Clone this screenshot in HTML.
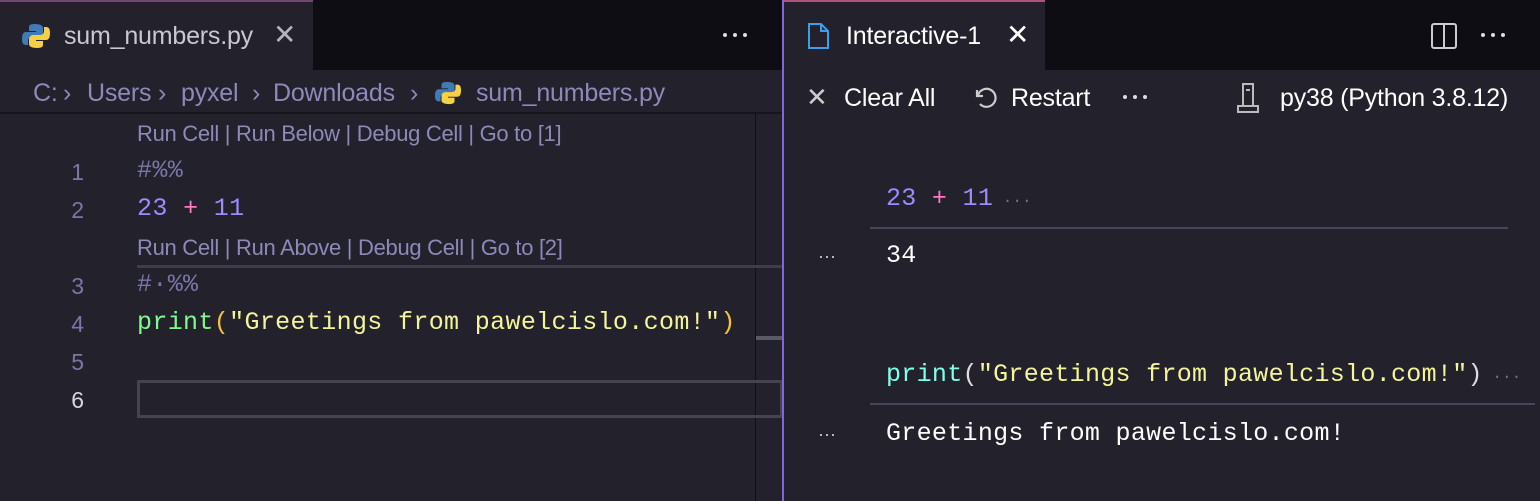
<!DOCTYPE html>
<html><head><style>
*{margin:0;padding:0;box-sizing:border-box}
body{width:1540px;height:501px;background:#22212c;overflow:hidden;position:relative;font-family:"Liberation Sans",sans-serif;color:#d8d6e0}
.abs{position:absolute;white-space:nowrap}
.ui{font-size:25px;letter-spacing:-0.2px}
.mono{font-family:"Liberation Mono",monospace}
.lm{font-size:25px;letter-spacing:0.35px}
.rm{font-size:25px;letter-spacing:0.3px}
.ln{color:#7a77a8;font-size:23px;width:30px;text-align:right}
.lens{color:#8d89b8;font-size:22px;letter-spacing:-0.3px}
.bc{color:#8d89b8;top:79px}
</style></head><body>
<div class="abs" style="left:0;top:0;width:1540px;height:70px;background:#0e0d13"></div>
<div class="abs" style="left:0;top:0;width:313px;height:70px;background:#22212c;border-top:2px solid #6e4a6e"></div>
<div class="abs" style="left:783px;top:0;width:262px;height:70px;background:#22212c;border-top:2px solid #b0527a"></div>
<svg class="abs" style="left:22px;top:22px" width="28" height="28" viewBox="0 0 28 28"><path d="M13 2c-6 0-6 2-6 4v3h7v1H4c-3 0-4 3-4 7s1 6 4 6h2v-4c0-3 2-4 4-4h7c2 0 4-2 4-4V6c0-2-2-4-8-4z" fill="#3f7bb5"/><path d="M15 26c6 0 6-2 6-4v-3h-7v-1h10c3 0 4-3 4-7s-1-6-4-6h-2v4c0 3-2 4-4 4h-7c-2 0-4 2-4 4v5c0 2 2 4 8 4z" fill="#f5d144"/></svg>
<div class="abs ui" style="left:64px;top:22px;color:#c9c7d2">sum_numbers.py</div>
<div class="abs" style="left:273px;top:18px;font-size:28px;color:#b5b3c0">✕</div>
<svg class="abs" style="left:722px;top:30px" width="30" height="10"><circle cx="3" cy="5" r="2" fill="#ddd"/><circle cx="13" cy="5" r="2" fill="#ddd"/><circle cx="23" cy="5" r="2" fill="#ddd"/></svg>
<div class="abs ui bc" style="left:33px">C:</div>
<div class="abs ui bc" style="left:63px">&#x203A;</div>
<div class="abs ui bc" style="left:87px">Users</div>
<div class="abs ui bc" style="left:158px">&#x203A;</div>
<div class="abs ui bc" style="left:181px">pyxel</div>
<div class="abs ui bc" style="left:252px">&#x203A;</div>
<div class="abs ui bc" style="left:273px">Downloads</div>
<div class="abs ui bc" style="left:410px">&#x203A;</div>
<svg class="abs" style="left:435px;top:80px" width="26" height="26" viewBox="0 0 28 28"><path d="M13 2c-6 0-6 2-6 4v3h7v1H4c-3 0-4 3-4 7s1 6 4 6h2v-4c0-3 2-4 4-4h7c2 0 4-2 4-4V6c0-2-2-4-8-4z" fill="#3f7bb5"/><path d="M15 26c6 0 6-2 6-4v-3h-7v-1h10c3 0 4-3 4-7s-1-6-4-6h-2v4c0 3-2 4-4 4h-7c-2 0-4 2-4 4v5c0 2 2 4 8 4z" fill="#f5d144"/></svg>
<div class="abs ui bc" style="left:476px">sum_numbers.py</div>
<div class="abs" style="left:0;top:112px;width:783px;height:2px;background:#16151c"></div>
<div class="abs" style="left:755px;top:114px;width:1px;height:387px;background:#111"></div>
<div class="abs" style="left:756px;top:336px;width:27px;height:4px;background:#5a5966"></div>
<div class="abs lens" style="left:137px;top:121px">Run Cell | Run Below | Debug Cell | Go to [1]</div>
<div class="abs ln" style="left:54px;top:159px">1</div>
<div class="abs mono lm" style="left:137px;top:156px;color:#7a77a8">#%%</div>
<div class="abs ln" style="left:54px;top:197px">2</div>
<div class="abs mono lm" style="left:137px;top:194px"><span style="color:#9b8cff">23</span> <span style="color:#ff79c6">+</span> <span style="color:#9b8cff">11</span></div>
<div class="abs lens" style="left:137px;top:235px">Run Cell | Run Above | Debug Cell | Go to [2]</div>
<div class="abs" style="left:137px;top:265px;width:646px;height:3px;background:#3e3d49"></div>
<div class="abs ln" style="left:54px;top:273px">3</div>
<div class="abs mono lm" style="left:137px;top:270px;color:#7a77a8">#&#183;%%</div>
<div class="abs ln" style="left:54px;top:311px">4</div>
<div class="abs mono lm" style="left:137px;top:308px"><span style="color:#7dfb8c">print</span><span style="color:#f5c23a">(</span><span style="color:#f4f59a">"Greetings from pawelcislo.com!"</span><span style="color:#f5c23a">)</span></div>
<div class="abs ln" style="left:54px;top:349px">5</div>
<div class="abs ln" style="left:54px;top:387px;color:#d8d6e0">6</div>
<div class="abs" style="left:137px;top:380px;width:646px;height:38px;border:3px solid #45434f"></div>
<div class="abs" style="left:782px;top:0;width:2px;height:501px;background:#8466d8"></div>
<svg class="abs" style="left:806px;top:22px" width="26" height="28" viewBox="0 0 26 28"><path d="M3 2h12l7 7v17H3z M15 2v7h7" fill="none" stroke="#3e9ee6" stroke-width="2"/></svg>
<div class="abs ui" style="left:846px;top:22px;color:#fff">Interactive-1</div>
<div class="abs" style="left:1006px;top:18px;font-size:28px;color:#fff">✕</div>
<svg class="abs" style="left:1430px;top:22px" width="28" height="28" viewBox="0 0 28 28"><rect x="2" y="2" width="24" height="24" rx="2" fill="none" stroke="#ccc" stroke-width="2"/><path d="M14 2v24" stroke="#ccc" stroke-width="2"/></svg>
<svg class="abs" style="left:1480px;top:30px" width="30" height="10"><circle cx="3" cy="5" r="2" fill="#ddd"/><circle cx="13" cy="5" r="2" fill="#ddd"/><circle cx="23" cy="5" r="2" fill="#ddd"/></svg>
<div class="abs" style="left:806px;top:82px;font-size:26px;color:#ccc">✕</div>
<div class="abs ui" style="left:844px;top:84px;color:#fff">Clear All</div>
<svg class="abs" style="left:972px;top:84px" width="28" height="28" viewBox="0 0 28 28"><path d="M5 6v6h6 M6 11a9 9 0 1 1 2 9" fill="none" stroke="#ccc" stroke-width="2.2"/></svg>
<div class="abs ui" style="left:1011px;top:84px;color:#fff">Restart</div>
<svg class="abs" style="left:1122px;top:92px" width="30" height="10"><circle cx="3" cy="5" r="2" fill="#ddd"/><circle cx="13" cy="5" r="2" fill="#ddd"/><circle cx="23" cy="5" r="2" fill="#ddd"/></svg>
<svg class="abs" style="left:1236px;top:82px" width="24" height="32" viewBox="0 0 24 32"><rect x="7" y="2" width="10" height="22" fill="none" stroke="#bbb" stroke-width="2"/><path d="M10 8h4M2 24h20v6H2z" fill="none" stroke="#bbb" stroke-width="2"/></svg>
<div class="abs ui" style="left:1280px;top:84px;color:#fff">py38 (Python 3.8.12)</div>
<div class="abs mono rm" style="left:886px;top:184px"><span style="color:#9b8cff">23</span> <span style="color:#ff79c6">+</span> <span style="color:#9b8cff">11</span><span style="color:#777;font-size:16px;letter-spacing:0"> ···</span></div>
<div class="abs" style="left:870px;top:227px;width:638px;height:2px;background:#47465a"></div>
<div class="abs" style="left:818px;top:246px;font-size:18px;color:#ccc">···</div>
<div class="abs mono rm" style="left:886px;top:241px;color:#fff">34</div>
<div class="abs mono rm" style="left:886px;top:360px"><span style="color:#80ffea">print</span><span style="color:#ddd">(</span><span style="color:#f4f59a">"Greetings from pawelcislo.com!"</span><span style="color:#ddd">)</span><span style="color:#777;font-size:16px;letter-spacing:0"> ···</span></div>
<div class="abs" style="left:870px;top:403px;width:665px;height:2px;background:#47465a"></div>
<div class="abs" style="left:818px;top:424px;font-size:18px;color:#ccc">···</div>
<div class="abs mono rm" style="left:886px;top:419px;color:#fff">Greetings from pawelcislo.com!</div>
</body></html>
